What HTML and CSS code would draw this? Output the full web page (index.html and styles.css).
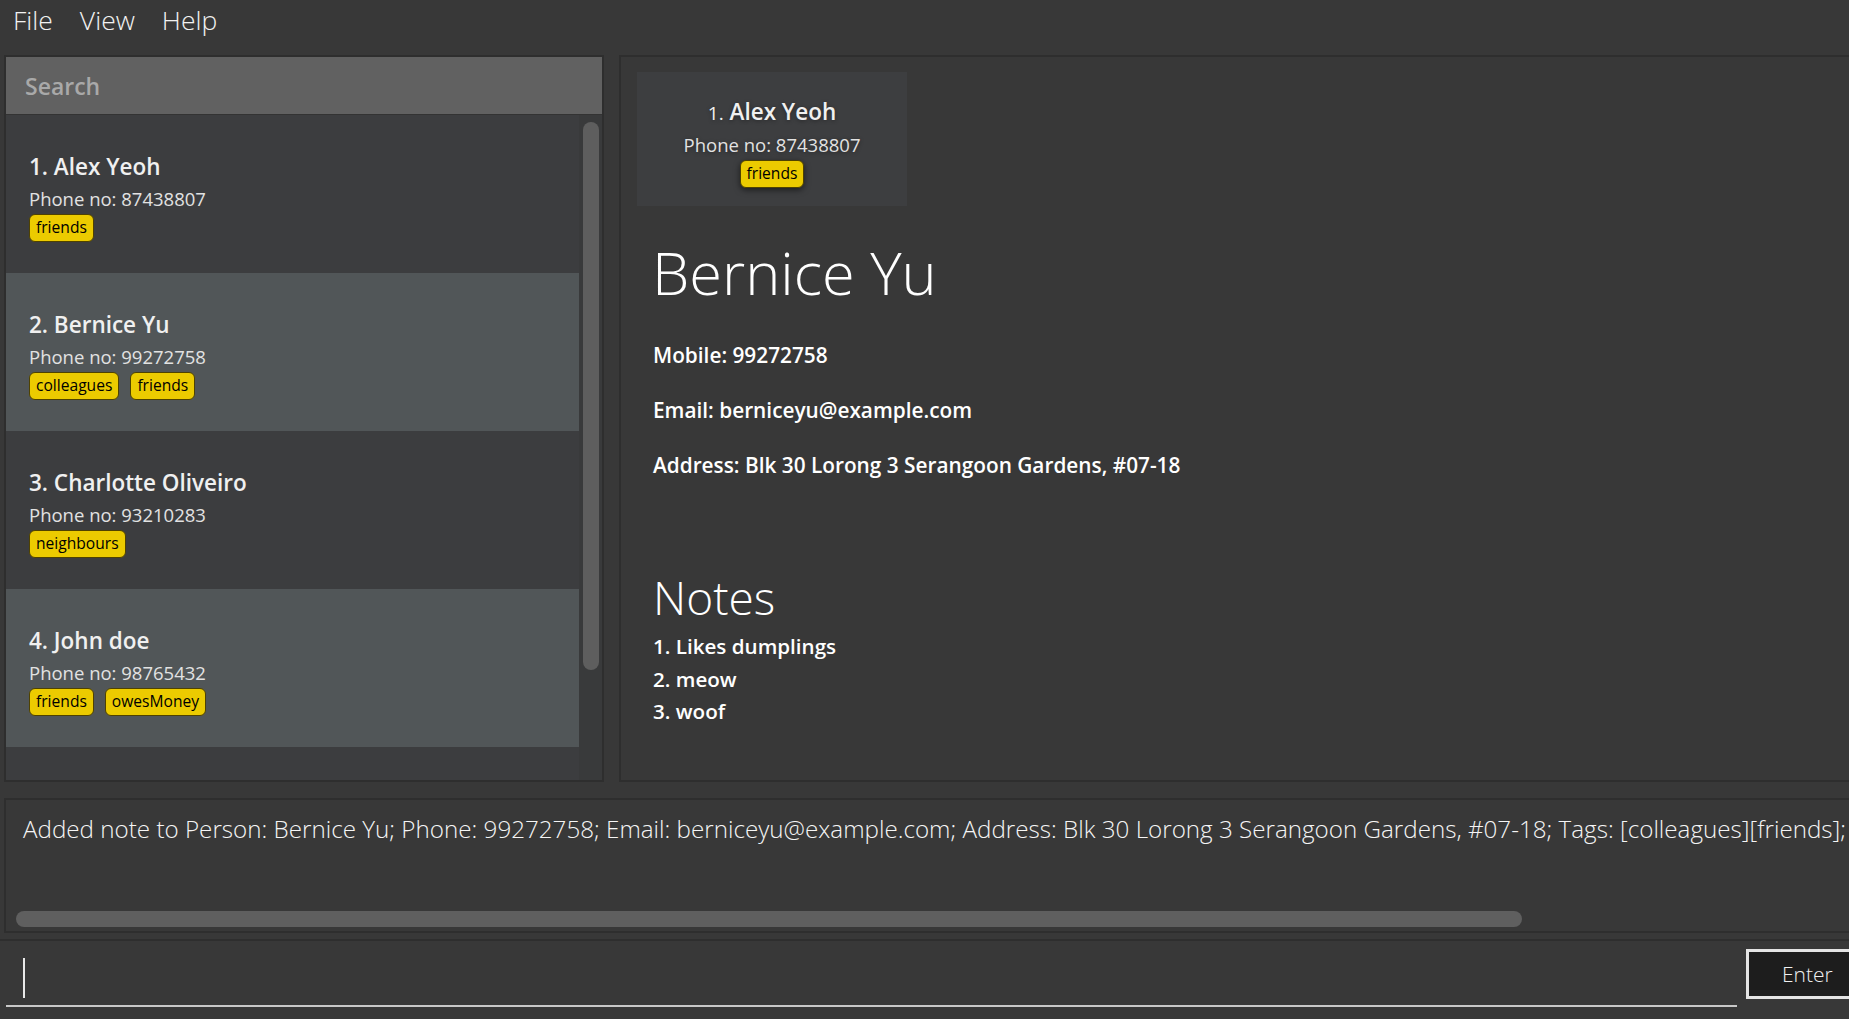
FILE: index.html
```html
<!DOCTYPE html>
<html>
<head>
<meta charset="utf-8">
<link rel="stylesheet" href="styles.css">
</head>
<body>
<div class="app">
  <div class="menubar">
    <span class="menu-item">File</span>
    <span class="menu-item">View</span>
    <span class="menu-item">Help</span>
  </div>
  <div class="main">
    <div class="left-panel">
      <div class="search">Search</div>
      <div class="list-area">
        <div class="cards">
          <div class="card">
            <div class="card-name">1. Alex Yeoh</div>
            <div class="card-phone">Phone no: 87438807</div>
            <div class="tags"><span class="tag">friends</span></div>
          </div>
          <div class="card card-alt">
            <div class="card-name">2. Bernice Yu</div>
            <div class="card-phone">Phone no: 99272758</div>
            <div class="tags"><span class="tag">colleagues</span><span class="tag">friends</span></div>
          </div>
          <div class="card">
            <div class="card-name">3. Charlotte Oliveiro</div>
            <div class="card-phone">Phone no: 93210283</div>
            <div class="tags"><span class="tag">neighbours</span></div>
          </div>
          <div class="card card-alt">
            <div class="card-name">4. John doe</div>
            <div class="card-phone">Phone no: 98765432</div>
            <div class="tags"><span class="tag">friends</span><span class="tag">owesMoney</span></div>
          </div>
        </div>
        <div class="vtrack"><div class="vthumb"></div></div>
      </div>
    </div>
    <div class="right-panel">
      <div class="mini-card">
        <div class="mini-name"><span class="mini-index">1.</span> Alex Yeoh</div>
        <div class="mini-phone">Phone no: 87438807</div>
        <div class="tags tags-center"><span class="tag tag-shadow">friends</span></div>
      </div>
      <div class="details">
        <div class="big-name">Bernice Yu</div>
        <div class="detail-line first">Mobile: 99272758</div>
        <div class="detail-line">Email: berniceyu@example.com</div>
        <div class="detail-line">Address: Blk 30 Lorong 3 Serangoon Gardens, #07-18</div>
        <div class="notes-title">Notes</div>
        <div class="note-item">1. Likes dumplings</div>
        <div class="note-item">2. meow</div>
        <div class="note-item">3. woof</div>
      </div>
    </div>
  </div>
  <div class="result">
    <div class="result-text">Added note to Person: Bernice Yu; Phone: 99272758; Email: berniceyu@example.com; Address: Blk 30 Lorong 3 Serangoon Gardens, #07-18; Tags: [colleagues][friends];</div>
    <div class="hthumb"></div>
  </div>
  <div class="command">
    <div class="command-input"><span class="caret"></span></div>
    <div class="enter-btn">Enter</div>
  </div>
</div>
</body>
</html>
```
FILE: styles.css
```css
* { box-sizing: border-box; }
html, body {
  margin: 0;
  padding: 0;
  width: 1849px;
  height: 1019px;
  overflow: hidden;
  background: #383838;
  font-family: "Open Sans", "Noto Sans", "Liberation Sans", sans-serif;
}
.app {
  display: flex;
  flex-direction: column;
  width: 1849px;
  height: 1019px;
}
.menubar {
  height: 55px;
  display: flex;
  align-items: flex-start;
  gap: 27px;
  padding: 1px 0 0 13px;
  flex-shrink: 0;
}
.menu-item {
  font-size: 26.5px;
  font-weight: 300;
  line-height: 38px;
  color: #f2f2f2;
}
.main {
  display: flex;
  height: 727px;
  flex-shrink: 0;
}
.left-panel {
  margin-left: 4px;
  width: 600px;
  flex-shrink: 0;
  border: 2px solid #2e2e2e;
  display: flex;
  flex-direction: column;
  background: #3c3d3f;
}
.search {
  height: 58px;
  background: #616161;
  color: #a9a9a9;
  font-size: 23px;
  font-weight: 600;
  line-height: 58px;
  padding-left: 19px;
  border-bottom: 1px solid #333;
  flex-shrink: 0;
}
.list-area {
  flex: 1;
  display: flex;
  overflow: hidden;
}
.cards {
  width: 573px;
  flex-shrink: 0;
}
.card {
  height: 158px;
  padding: 37px 0 0 23px;
  background: #3c3d3f;
}
.card-alt { background: #515658; }
.card-name {
  font-size: 22.5px;
  font-weight: 600;
  line-height: 30px;
  color: #f0f0f0;
}
.card-phone {
  margin-top: 4px;
  font-size: 18.5px;
  line-height: 26px;
  color: #e2e2e2;
}
.tags {
  margin-top: 2px;
  display: flex;
  gap: 11px;
}
.tags-center { justify-content: center; margin-top: 2px; }
.tag {
  display: inline-block;
  height: 28px;
  line-height: 24px;
  padding: 0 6px;
  font-size: 15.6px;
  color: #000;
  background: #eccb00;
  border: 1.5px solid #4f4200;
  border-radius: 6px;
}
.tag-shadow { box-shadow: 0 2px 6px rgba(0,0,0,0.55); }
.vtrack {
  flex: 1;
  background: #393a3b;
  padding: 7px 3px 0 4px;
}
.vthumb {
  height: 548px;
  background: #5e5e5e;
  border-radius: 8px;
}
.right-panel {
  margin-left: 15px;
  width: 1400px;
  flex-shrink: 0;
  border: 2px solid #2e2e2e;
  background: #383838;
  padding: 15px 0 0 16px;
}
.mini-card {
  width: 270px;
  height: 134px;
  background: #3d3e40;
  padding-top: 25px;
  text-align: center;
}
.mini-name {
  font-size: 22.5px;
  font-weight: 600;
  line-height: 30px;
  color: #f0f0f0;
  text-shadow: 0 1px 4px rgba(0,0,0,0.4);
}
.mini-index { font-weight: 400; font-size: 19px; }
.mini-phone {
  margin-top: 4px;
  font-size: 18.5px;
  line-height: 26px;
  color: #e2e2e2;
  text-shadow: 0 1px 4px rgba(0,0,0,0.4);
}
.details {
  padding-left: 16px;
  color: #ffffff;
}
.big-name {
  margin-top: 31px;
  font-size: 59.5px;
  font-weight: 300;
  line-height: 70px;
  margin-left: -1px;
}
.detail-line {
  font-size: 20.8px;
  font-weight: 600;
  line-height: 26px;
  margin-top: 29px;
}
.detail-line.first { margin-top: 35px; }
.notes-title {
  margin-top: 90px;
  font-size: 46px;
  font-weight: 300;
  line-height: 58px;
}
.note-item {
  font-size: 20.6px;
  font-weight: 600;
  line-height: 32.5px;
}
.notes-title + .note-item { margin-top: 4px; }
.result {
  margin: 16px 0 0 4px;
  width: 1900px;
  height: 135px;
  flex-shrink: 0;
  border: 2px solid #2e2e2e;
  padding: 13px 0 0 17px;
  display: flex;
  flex-direction: column;
}
.result-text {
  font-size: 24.2px;
  font-weight: 300;
  line-height: 32px;
  color: #f5f5f5;
  white-space: nowrap;
}
.hthumb {
  margin-top: auto;
  margin-bottom: 4px;
  margin-left: -7px;
  width: 1506px;
  height: 16px;
  background: #5f5f5f;
  border-radius: 8px;
}
.command {
  margin-top: 6px;
  flex: 1;
  border-top: 2px solid #2e2e2e;
  display: flex;
  align-items: flex-start;
  padding: 8px 0 0 6px;
}
.command-input {
  width: 1731px;
  height: 58px;
  border-bottom: 2px solid #c8c8c8;
  padding: 9px 0 0 17px;
  flex-shrink: 0;
}
.caret {
  display: block;
  width: 2px;
  height: 40px;
  background: #e8e8e8;
}
.enter-btn {
  margin-left: 9px;
  width: 120px;
  height: 50px;
  flex-shrink: 0;
  background: #1d1d1d;
  border: 3px solid #e4e4e4;
  color: #f0f0f0;
  font-size: 21px;
  font-weight: 300;
  line-height: 44px;
  padding-left: 33px;
}
```
